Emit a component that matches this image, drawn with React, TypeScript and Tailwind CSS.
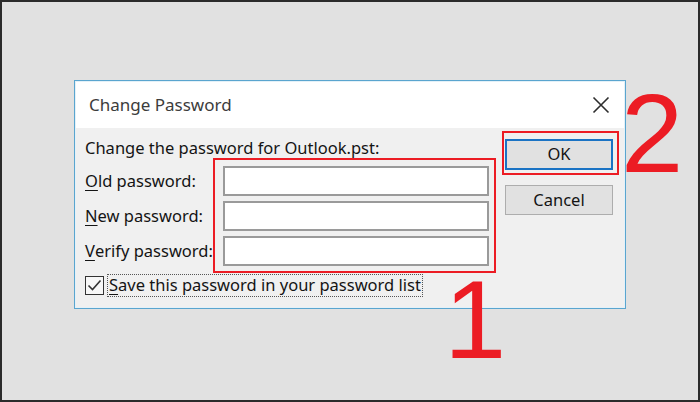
import React from "react";

const font = { fontFamily: '"Noto Sans", "Open Sans", sans-serif' } as React.CSSProperties;

function Label({ accel, rest }: { accel: string; rest: string }) {
  return (
    <div className="h-[30px] flex items-center text-[16.5px] text-[#141414] whitespace-nowrap">
      <span className="underline underline-offset-[3px]">{accel}</span>
      {rest}
    </div>
  );
}

function Input() {
  return <div className="w-[266px] h-[30px] bg-white border-2 border-[#9a9a9a]" />;
}

export default function App() {
  return (
    <div
      className="relative w-[700px] h-[402px] overflow-hidden border-2 border-[#2b2b2b] bg-[#e1e1e1] pl-[72px] pt-[78px]"
      style={font}
    >
      <div className="w-[552px] h-[229px] border border-[#5aa5cf] bg-[#f0f0f0] shadow-[inset_0_0_0_1px_#e4f1f8] flex flex-col">
        <div className="h-[46px] bg-white flex items-center justify-between pl-[13px] pr-[14px] mx-px mt-px">
          <span className="text-[17px] text-[#3c3c3c]">Change Password</span>
          <svg width="18" height="18" viewBox="0 0 18 18" className="block">
            <path d="M1.5 1.5 L16.5 16.5 M16.5 1.5 L1.5 16.5" stroke="#2d2d2d" strokeWidth="1.6" fill="none" />
          </svg>
        </div>
        <div className="flex pl-[10px] pt-[3px]">
          <div className="w-[411px] flex flex-col">
            <div className="mt-[7px] h-[20px] leading-[20px] text-[16.5px] text-[#141414] whitespace-nowrap">
              Change the password for Outlook.pst:
            </div>
            <div className="flex">
              <div className="w-[128px] flex flex-col pt-[8px] gap-[5px]">
                <Label accel="O" rest="ld password:" />
                <Label accel="N" rest="ew password:" />
                <Label accel="V" rest="erify password:" />
              </div>
              <div className="w-[283px] h-[115px] border-2 border-[#ec1c24] pt-[6px] pl-[8px] flex flex-col gap-[5px]">
                <Input />
                <Input />
                <Input />
              </div>
            </div>
            <div className="h-[24px] flex items-center">
              <div className="w-[19px] h-[19px] border border-[#333] bg-[#f7f7f7] flex items-center justify-center">
                <svg width="17" height="17" viewBox="0 0 17 17" className="block">
                  <path d="M2.5 8.5 L6.5 12.5 L14.5 3.5" stroke="#333" strokeWidth="1.6" fill="none" />
                </svg>
              </div>
              <div className="ml-[3px] h-[23px] border border-dotted border-[#555] px-[1px] flex items-center text-[16.5px] text-[#141414] whitespace-nowrap">
                <span className="underline underline-offset-[3px]">S</span>ave this password in your password list
              </div>
            </div>
          </div>
          <div className="ml-[6px] flex flex-col">
            <div className="w-[117px] h-[44px] border-2 border-[#ec1c24] pt-[6px] pl-px">
              <div className="w-[108px] h-[31px] border-2 border-[#1a73c4] bg-[#e1e1e1] flex items-center justify-center text-[16.5px] text-[#141414]">
                OK
              </div>
            </div>
            <div className="mt-[10px] ml-[3px] w-[108px] h-[30px] border border-[#adadad] bg-[#e1e1e1] flex items-center justify-center text-[16.5px] text-[#141414]">
              Cancel
            </div>
          </div>
        </div>
      </div>
      <span
        className="absolute left-[619px] top-[76px] text-[112px] leading-none text-[#ec1c24]"
        style={{ fontFamily: '"Liberation Sans", Arial, sans-serif' }}
      >
        2
      </span>
      <span
        className="absolute left-[442px] top-[262px] text-[112px] leading-none text-[#ec1c24]"
        style={{ fontFamily: '"Liberation Sans", Arial, sans-serif' }}
      >
        1
      </span>
    </div>
  );
}
